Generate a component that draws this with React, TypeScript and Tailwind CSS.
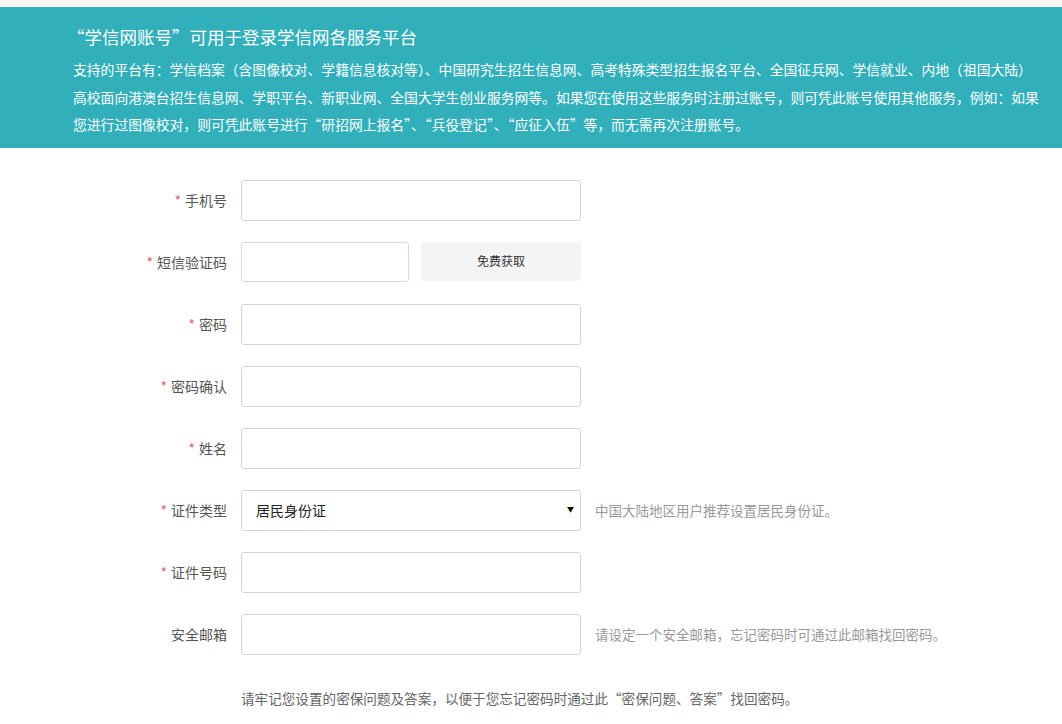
import React from "react";

// Registration form for 学信网 account

const FONT = {
  fontFamily:
    '"Microsoft YaHei", "Noto Sans CJK SC", "Noto Sans", sans-serif',
};

type Row = {
  label: string;
  required: boolean;
  kind: "input" | "sms" | "select";
  hint?: string;
};

const ROWS: Row[] = [
  { label: "手机号", required: true, kind: "input" },
  { label: "短信验证码", required: true, kind: "sms" },
  { label: "密码", required: true, kind: "input" },
  { label: "密码确认", required: true, kind: "input" },
  { label: "姓名", required: true, kind: "input" },
  {
    label: "证件类型",
    required: true,
    kind: "select",
    hint: "中国大陆地区用户推荐设置居民身份证。",
  },
  { label: "证件号码", required: true, kind: "input" },
  {
    label: "安全邮箱",
    required: false,
    kind: "input",
    hint: "请设定一个安全邮箱，忘记密码时可通过此邮箱找回密码。",
  },
];

function Banner() {
  return (
    <section className="bg-[#31afbb] text-white pl-[73px] pt-[17px] pb-[9px]">
      <h1 className="text-[17.5px] leading-[26px] font-normal -ml-[6px]">
        “学信网账号”可用于登录学信网各服务平台
      </h1>
      <div className="mt-[6px] text-[13.8px] leading-[27.5px] whitespace-nowrap">
        <p>
          支持的平台有：学信档案（含图像校对、学籍信息核对等）、中国研究生招生信息网、高考特殊类型招生报名平台、全国征兵网、学信就业、内地（祖国大陆）
        </p>
        <p>
          高校面向港澳台招生信息网、学职平台、新职业网、全国大学生创业服务网等。如果您在使用这些服务时注册过账号，则可凭此账号使用其他服务，例如：如果
        </p>
        <p>
          您进行过图像校对，则可凭此账号进行“研招网上报名”、“兵役登记”、“应征入伍”等，而无需再次注册账号。
        </p>
      </div>
    </section>
  );
}

function Field({ row }: { row: Row }) {
  return (
    <div className="flex items-center h-[41px]">
      <label className="w-[227px] shrink-0 text-right text-[14px] text-[#555]">
        {row.required && <span className="text-[#e0607c] mr-[4px]">*</span>}
        {row.label}
      </label>

      <div className="ml-[14px] w-[340px] shrink-0 h-full">
        {row.kind === "input" && (
          <input className="w-full h-full rounded-[3px] border border-[#d5d5d5] bg-white px-3 text-[14px] outline-none" />
        )}
        {row.kind === "sms" && (
          <div className="flex h-full gap-[12px]">
            <input className="w-[168px] h-[40px] rounded-[3px] border border-[#e0d4d8] bg-white px-3 text-[14px] outline-none" />
            <button className="w-[160px] h-[39px] rounded-[3px] bg-[#f4f4f6] text-[12px] text-[#333]">
              免费获取
            </button>
          </div>
        )}
        {row.kind === "select" && (
          <div className="relative w-full h-full rounded-[3px] border border-[#d5d5d5] bg-white flex items-center pl-[14px]">
            <span className="text-[14px] text-[#222]">居民身份证</span>
            <span className="absolute right-[6px] top-[13px] text-[7px] text-black">
              ▼
            </span>
          </div>
        )}
      </div>

      {row.hint && (
        <span className="ml-[14px] text-[13.5px] text-[#999] whitespace-nowrap">
          {row.hint}
        </span>
      )}
    </div>
  );
}

export default function App() {
  return (
    <div className="min-h-screen bg-white" style={FONT}>
      <div className="h-[7px] bg-[#f7f7f7]" />
      <Banner />

      <form className="pt-[32px] flex flex-col gap-[21px]">
        {ROWS.map((row) => (
          <Field key={row.label} row={row} />
        ))}
      </form>

      <p className="pl-[241px] mt-[33px] text-[13.6px] text-[#666]">
        请牢记您设置的密保问题及答案，以便于您忘记密码时通过此“密保问题、答案”找回密码。
      </p>
    </div>
  );
}
